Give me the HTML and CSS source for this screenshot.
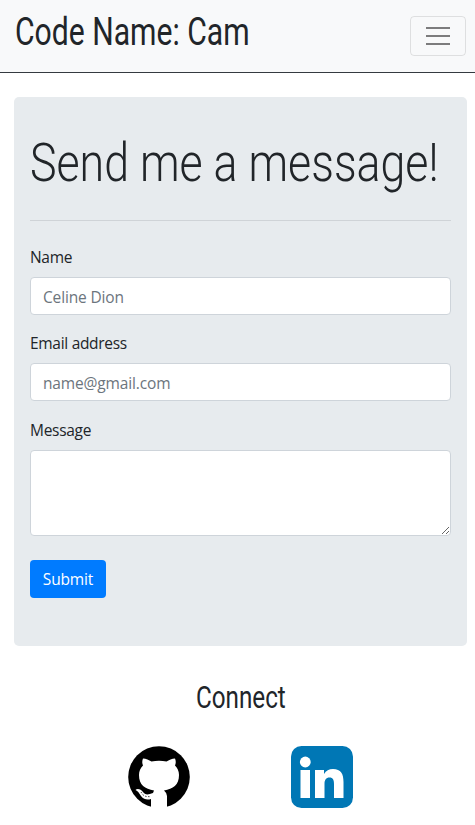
FILE: index.html
```html
<!DOCTYPE html>
<html lang="en">
<head>
<meta charset="utf-8">
<title>Code Name: Cam</title>
<link rel="stylesheet" href="styles.css">
</head>
<body>
<header class="navbar">
  <h1 class="brand"><span class="condensed">Code Name: Cam</span></h1>
  <button class="toggler" type="button" aria-label="Menu">
    <svg width="30" height="30" viewBox="0 0 30 30"><path d="M3 7h24M3 15h24M3 23h24" stroke="rgba(0,0,0,.5)" stroke-width="2"/></svg>
  </button>
</header>
<main class="card">
  <h2 class="title"><span class="condensed">Send me a message!</span></h2>
  <hr class="rule">
  <form>
    <div class="group">
      <label class="label" for="name">Name</label>
      <input class="control" id="name" type="text" placeholder="Celine Dion">
    </div>
    <div class="group">
      <label class="label" for="email">Email address</label>
      <input class="control" id="email" type="email" placeholder="name@gmail.com">
    </div>
    <div class="group group-message">
      <label class="label" for="message">Message</label>
      <textarea class="control area" id="message"></textarea>
    </div>
    <button class="submit" type="button">Submit</button>
  </form>
</main>
<footer class="footer">
  <h3 class="connect"><span class="condensed">Connect</span></h3>
  <div class="links">
    <svg class="icon" viewBox="0 0 62 62">
      <circle cx="31" cy="31" r="30.8" fill="#000"/>
      <path d="M23 63V53C20 54 16 54 13 50C11 47 10 45 7.500 44C9 42 13 43 15 46C17 49 20 49 25 47L26 44.500C17 43 11 39 11 29C11 25 12.500 22 15 19.500C14 17 14 15 15 12.500C18 12.500 21 14 23.500 15.500Q31 14 38.500 15.500C41 14 44 12.500 47 12.500C48 15 48 17 47 19.500C49.500 22 51 25 51 29C51 39 45 43 36 44.500Q39 47 39 50V63Z" fill="#fff"/>
      <path d="M13 46l2 3 3 1.500 5 .3" fill="none" stroke="#000" stroke-width=".7" stroke-dasharray="1.500 1.500"/>
    </svg>
    <svg class="icon" viewBox="0 0 62 62">
      <rect width="62" height="62" rx="10.500" fill="#0077b5"/>
      <circle cx="14.300" cy="16" r="5.400" fill="#fff"/>
      <path d="M9.500 24H19V52H9.500zM24 24H33V28C35 24.500 38 23 42 23C50 23 52.500 28 52.500 36V52H43V38C43 34 42 31.500 38.500 31.500C35 31.500 33.500 34 33.500 38V52H24z" fill="#fff"/>
    </svg>
  </div>
</footer>
</body>
</html>
```
FILE: styles.css
```css
* { box-sizing: border-box; }
body {
  margin: 0;
  background: #fff;
  color: #212529;
  font: 16px/24px "Open Sans", "Noto Sans", sans-serif;
}
h1, h2, h3 { margin: 0; font-family: Roboto, sans-serif; white-space: nowrap; }
.condensed { display: inline-block; transform-origin: left center; }
.navbar {
  height: 73px;
  padding: 0 9px 0 15px;
  display: flex;
  justify-content: space-between;
  align-items: center;
  background: #f8f9fa;
  border-bottom: 1px solid #343a40;
}
.brand { width: 240px; height: 62px; font-size: 39px; line-height: 48px; font-weight: 400; padding-top: 3px; }
.brand .condensed { transform: scaleX(.772); }
.toggler {
  width: 56px;
  height: 40px;
  padding: 0;
  display: flex;
  align-items: center;
  justify-content: center;
  background: transparent;
  border: 1px solid rgba(0,0,0,.1);
  border-radius: 4px;
}
.card {
  height: 549px;
  margin: 24px 8px 0 14px;
  padding: 32px 16px;
  background: #e7ebee;
  border-radius: 5px;
  overflow: hidden;
}
.title { height: 67px; font-size: 54px; line-height: 67px; font-weight: 300; }
.title .condensed { transform: scaleX(.828); }
.rule { margin: 24px 0; border: 0; border-top: 1px solid #cfd3d7; }
.group { margin-bottom: 16px; }
.label { display: block; margin-bottom: 8px; font-size: 15.500px; letter-spacing: -.3px; }
.control {
  display: block;
  width: 100%;
  height: 38px;
  padding: 7px 12px 5px;
  border: 1px solid #ced4da;
  border-radius: 4px;
  background: #fff;
  color: #495057;
  font: 15.500px/24px "Open Sans", sans-serif;
  letter-spacing: -.15px;
}
.control::placeholder { color: #6c757d; opacity: 1; }
.group-message { margin: 17px 0 24px; }
.area { height: 86px; resize: vertical; }
.submit {
  display: block;
  width: 76px;
  height: 38px;
  padding: 0;
  border: 0;
  border-radius: 4px;
  background: #007bff;
  color: #fff;
  font: 15.500px/24px "Open Sans", sans-serif;
  letter-spacing: -.15px;
}
.footer { padding-top: 31px; }
.connect { width: 90px; height: 40px; margin-left: 196px; font-size: 32px; line-height: 40px; font-weight: 400; }
.connect .condensed { transform: scaleX(.757); }
.links { display: flex; gap: 101px; margin: 29px 0 0 128px; }
.icon { width: 62px; height: 62px; display: block; }
```
